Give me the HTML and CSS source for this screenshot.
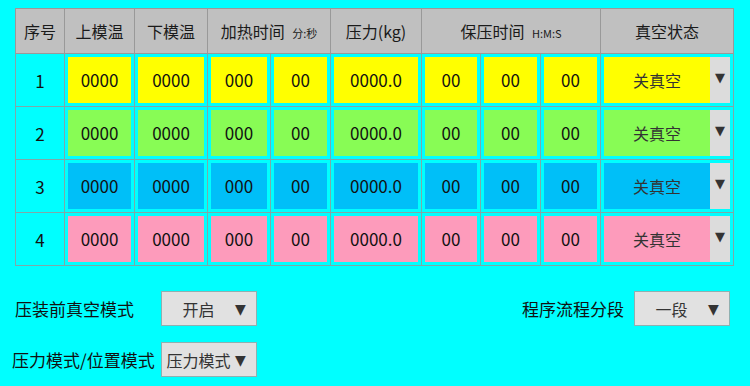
FILE: index.html
```html
<!DOCTYPE html>
<html lang="zh-CN">
<head>
    <meta charset="UTF-8">
    <title>工艺参数</title>
    <link rel="stylesheet" href="styles.css">
</head>
<body>
    <table class="recipe">
        <colgroup>
            <col style="width:49px"><col style="width:70px"><col style="width:73px">
            <col style="width:63px"><col style="width:60px"><col style="width:91px">
            <col style="width:59px"><col style="width:60px"><col style="width:60px">
            <col style="width:133px">
        </colgroup>
        <thead>
            <tr>
                <th>序号</th>
                <th>上模温</th>
                <th>下模温</th>
                <th colspan="2">加热时间 <span class="unit">分:秒</span></th>
                <th>压力(kg)</th>
                <th colspan="3">保压时间 <span class="unit">H:M:S</span></th>
                <th>真空状态</th>
            </tr>
        </thead>
        <tbody>
            <tr class="row-yellow">
                <td class="idx">1</td>
                <td><div class="val">0000</div></td>
                <td><div class="val">0000</div></td>
                <td><div class="val">000</div></td>
                <td><div class="val">00</div></td>
                <td><div class="val">0000.0</div></td>
                <td><div class="val">00</div></td>
                <td><div class="val">00</div></td>
                <td><div class="val">00</div></td>
                <td><div class="pick"><span class="pick-text">关真空</span><span class="pick-arrow">▼</span></div></td>
            </tr>
            <tr class="row-green">
                <td class="idx">2</td>
                <td><div class="val">0000</div></td>
                <td><div class="val">0000</div></td>
                <td><div class="val">000</div></td>
                <td><div class="val">00</div></td>
                <td><div class="val">0000.0</div></td>
                <td><div class="val">00</div></td>
                <td><div class="val">00</div></td>
                <td><div class="val">00</div></td>
                <td><div class="pick"><span class="pick-text">关真空</span><span class="pick-arrow">▼</span></div></td>
            </tr>
            <tr class="row-blue">
                <td class="idx">3</td>
                <td><div class="val">0000</div></td>
                <td><div class="val">0000</div></td>
                <td><div class="val">000</div></td>
                <td><div class="val">00</div></td>
                <td><div class="val">0000.0</div></td>
                <td><div class="val">00</div></td>
                <td><div class="val">00</div></td>
                <td><div class="val">00</div></td>
                <td><div class="pick"><span class="pick-text">关真空</span><span class="pick-arrow">▼</span></div></td>
            </tr>
            <tr class="row-pink">
                <td class="idx">4</td>
                <td><div class="val">0000</div></td>
                <td><div class="val">0000</div></td>
                <td><div class="val">000</div></td>
                <td><div class="val">00</div></td>
                <td><div class="val">0000.0</div></td>
                <td><div class="val">00</div></td>
                <td><div class="val">00</div></td>
                <td><div class="val">00</div></td>
                <td><div class="pick"><span class="pick-text">关真空</span><span class="pick-arrow">▼</span></div></td>
            </tr>
        </tbody>
    </table>

    <!-- Mode settings -->
    <div class="settings">
        <div class="setting-line">
            <div class="setting">
                <span class="setting-label">压装前真空模式</span>
                <div class="dropdown"><span class="dropdown-text">开启</span><span class="dropdown-arrow">▼</span></div>
            </div>
            <div class="setting">
                <span class="setting-label short">程序流程分段</span>
                <div class="dropdown"><span class="dropdown-text">一段</span><span class="dropdown-arrow">▼</span></div>
            </div>
        </div>
        <div class="setting-line">
            <div class="setting">
                <span class="setting-label wide">压力模式/位置模式</span>
                <div class="dropdown"><span class="dropdown-text">压力模式</span><span class="dropdown-arrow">▼</span></div>
            </div>
        </div>
    </div>
</body>
</html>
```

FILE: styles.css
```css
/* Page */
body {
    margin: 0;
    padding: 8px 17px 0 15px;
    background-color: #00ffff;
    font-family: 'Noto Sans CJK SC', 'Noto Sans', sans-serif;
    color: #111;
}

/* Recipe table */
.recipe {
    width: 718px;
    border-collapse: collapse;
    table-layout: fixed;
    border: 1px solid #8a9a9a;
}

.recipe th {
    height: 44px;
    padding: 0;
    background-color: #c0c0c0;
    border: 1px solid #999;
    font-size: 16px;
    font-weight: normal;
    color: #1a1a1a;
    white-space: nowrap;
}

.recipe .unit {
    font-size: 11px;
    margin-left: 4px;
}

.recipe td {
    padding: 3px;
    border: 1px solid #7ea8a8;
    text-align: center;
}

.recipe td.idx {
    font-size: 17px;
}

.val {
    height: 46px;
    line-height: 46px;
    font-size: 17px;
}

.pick {
    display: flex;
    height: 46px;
}

.pick-text {
    flex: 1;
    line-height: 46px;
    font-size: 16px;
    color: #333;
}

.pick-arrow {
    width: 20px;
    background-color: #dcdcdc;
    line-height: 42px;
    font-family: 'DejaVu Sans', sans-serif;
    font-size: 13px;
    color: #333;
}

.row-yellow .val, .row-yellow .pick-text { background-color: #ffff00; }
.row-green .val, .row-green .pick-text { background-color: #88fc55; }
.row-blue .val, .row-blue .pick-text { background-color: #00bff8; }
.row-pink .val, .row-pink .pick-text { background-color: #fd9bbb; }

/* Settings below the table */
.settings {
    margin-top: 25px;
    display: flex;
    flex-direction: column;
    gap: 16px;
}

.setting-line {
    display: flex;
    justify-content: space-between;
    padding-right: 3px;
}

.setting {
    display: flex;
    align-items: center;
}

.setting-label {
    width: 146px;
    font-size: 17px;
    color: #111;
}

.setting-label.wide {
    width: 149px;
    margin-left: -3px;
}

.setting-label.short {
    width: auto;
    margin-right: 10px;
}

.dropdown {
    display: flex;
    align-items: center;
    width: 94px;
    height: 33px;
    background-color: #e1e1e1;
    border: 1px solid #8fb0b0;
}

.dropdown-text {
    flex: 1;
    text-align: center;
    font-size: 16px;
    color: #333;
}

.dropdown-arrow {
    width: 16px;
    margin-right: 5px;
    font-family: 'DejaVu Sans', sans-serif;
    font-size: 14px;
    color: #333;
}
```
